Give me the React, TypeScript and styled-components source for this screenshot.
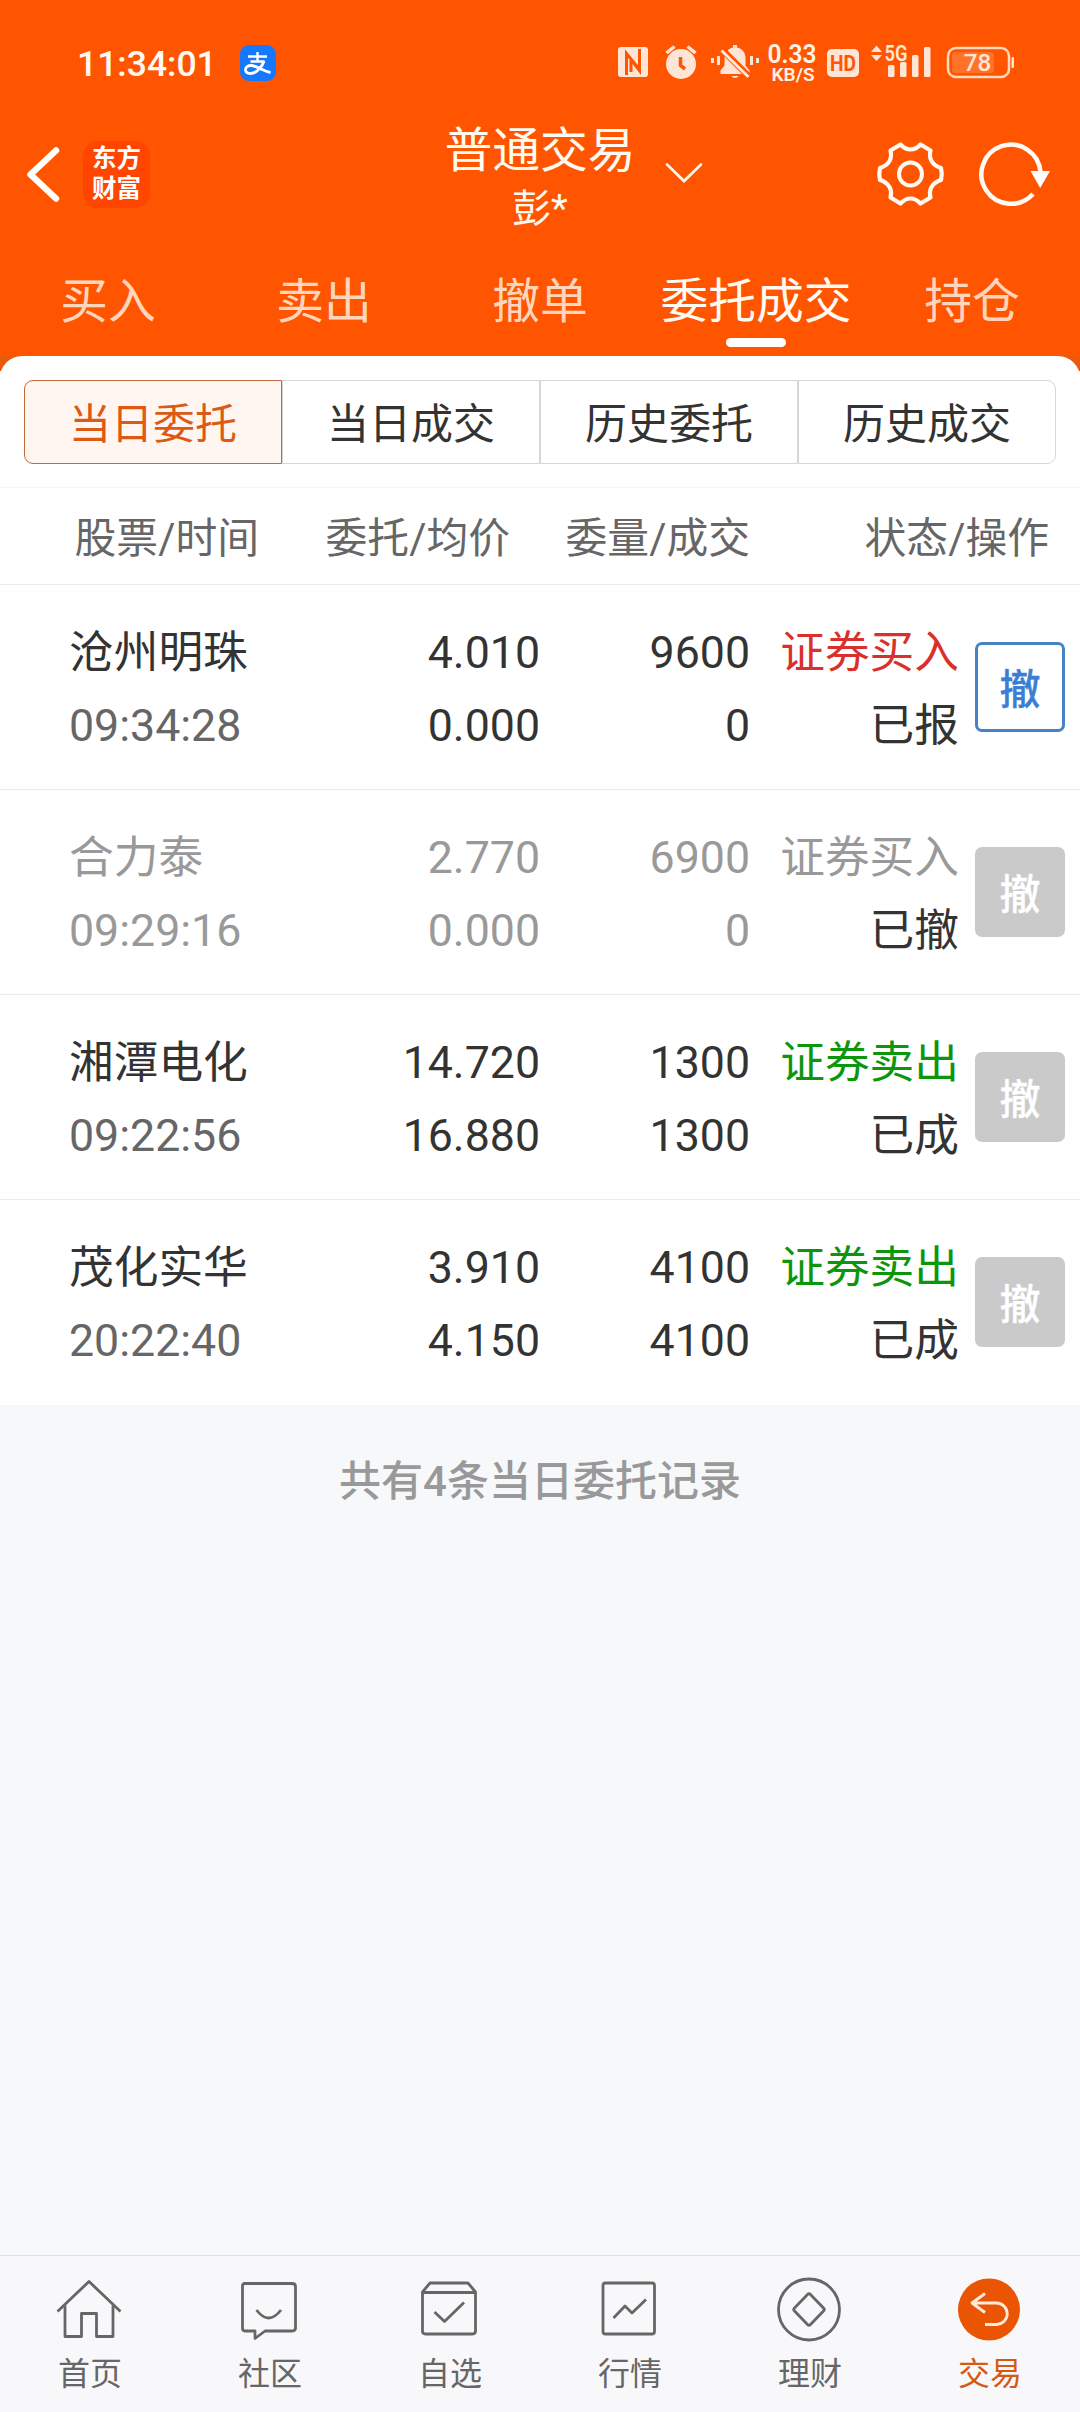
import React from 'react';
import styled, { createGlobalStyle, css } from 'styled-components';

const Global = createGlobalStyle`
  * { box-sizing: border-box; }
  body {
    margin: 0;
    background: #f7f8fa;
    font-family: Roboto, "Noto Sans CJK SC", sans-serif;
    font-weight: 400;
    -webkit-font-smoothing: antialiased;
  }
`;

const Screen = styled.div`
  width: 1080px;
  height: 2412px;
  display: flex;
  flex-direction: column;
  background: #f7f8fa;
  overflow: hidden;
`;

const Top = styled.header`
  background: #ff5500;
  height: 356px;
  flex: none;
  display: flex;
  flex-direction: column;
  color: #fffaf2;
`;

const StatusBar = styled.div`
  height: 102px;
  padding: 24px 64px 0 77px;
  display: flex;
  align-items: center;
  flex: none;
`;

const Clock = styled.span`
  font-size: 35.5px;
  font-weight: 500;
  line-height: 40px;
  width: 163px;
  padding-top: 1px;
`;

const StatusIcons = styled.div`
  margin-left: auto;
  padding-top: 4px;
  display: flex;
  svg { display: block; }
`;

const TitleBar = styled.div`
  height: 150px;
  flex: none;
  display: grid;
  grid-template-columns: 1fr 192px 1fr;
`;

const Side = styled.div<{ $end?: boolean }>`
  display: flex;
  padding-top: 39px;
  ${(p) => (p.$end ? css`justify-content: space-between; padding-right: 26px; padding-left: 28px;` : css`padding-left: 26px; gap: 22px;`)}
  svg { display: block; }
`;

const Brand = styled.div`
  width: 67px;
  height: 67px;
  border-radius: 15px;
  background: #ff4500;
  color: #fff;
  font-size: 24.5px;
  font-weight: 700;
  line-height: 30px;
  padding-top: 3px;
  text-align: center;
`;

const Titles = styled.div`
  display: flex;
  flex-direction: column;
  align-items: center;
  padding-top: 19px;
`;

const Title = styled.div`
  font-size: 47.8px;
  line-height: 60px;
  white-space: nowrap;
`;

const Subtitle = styled.div`
  font-size: 39px;
  line-height: 48px;
  margin-top: 4px;
`;

const Tabs = styled.nav`
  display: grid;
  grid-template-columns: repeat(5, 1fr);
  height: 104px;
`;

const Tab = styled.div<{ $active?: boolean }>`
  display: flex;
  flex-direction: column;
  align-items: center;
  padding-top: 20px;
  font-size: 47.8px;
  line-height: 60px;
  white-space: nowrap;
  color: ${(p) => (p.$active ? '#fffaf2' : '#ffd6bc')};
  &::after {
    content: "";
    width: 60px;
    height: 9px;
    margin-top: 6px;
    border-radius: 4.5px;
    background: ${(p) => (p.$active ? '#fff' : 'transparent')};
  }
`;

const Lip = styled.div`
  height: 15px;
  flex: none;
  overflow: hidden;
  background: #ea5a0c;
  &::before {
    content: "";
    display: block;
    height: 50px;
    border-radius: 22px;
    background: #fff;
  }
`;

const Panel = styled.main`
  background: #fff;
  flex: none;
`;

const SegmentWrap = styled.div`
  padding: 9px 24px 23px;
  border-bottom: 1px solid #f5f5f5;
`;

const Segments = styled.div`
  display: grid;
  grid-template-columns: repeat(4, 1fr);
  height: 84px;
`;

const Segment = styled.button<{ $active?: boolean }>`
  font: inherit;
  font-size: 42px;
  padding: 0 0 3px;
  background: ${(p) => (p.$active ? '#fff6f2' : '#fff')};
  color: ${(p) => (p.$active ? '#dc5a14' : '#333')};
  border: 1px solid ${(p) => (p.$active ? '#c06a3c' : '#d4d6d8')};
  &:first-child { border-radius: 9px 0 0 9px; }
  &:last-child { border-radius: 0 9px 9px 0; }
`;

const columns = css`
  display: grid;
  align-items: center;
`;

const HeadRow = styled.div`
  ${columns}
  grid-template-columns: 259px 251px 240px 1fr;
  height: 97px;
  padding: 5px 31px 0 0;
  border-bottom: 1px solid #ebebeb;
  font-size: 41.8px;
  line-height: 60px;
  color: #666;
  text-align: right;
`;

const Row = styled.div<{ $last?: boolean }>`
  ${columns}
  grid-template-columns: 260px 280px 210px 209px 1fr;
  height: 205px;
  padding: 0 15px 0 0;
  border-bottom: 1px solid ${(p) => (p.$last ? '#fff' : '#ebebeb')};
`;

const Cell = styled.div<{ $left?: boolean }>`
  display: flex;
  flex-direction: column;
  font-size: 44.7px;
  line-height: 73px;
  white-space: nowrap;
  text-align: ${(p) => (p.$left ? 'left' : 'right')};
  padding-left: ${(p) => (p.$left ? '69px' : '0')};
  padding-top: 6px;
`;

const Value = styled.span<{ $color?: string }>`
  display: block;
  height: 73px;
  color: ${(p) => p.$color || '#333'};
`;

const Cancel = styled.button<{ $enabled?: boolean }>`
  justify-self: end;
  width: 90px;
  height: 90px;
  padding: 0 0 3px;
  font: inherit;
  font-size: 41px;
  font-weight: 500;
  -webkit-text-stroke: 0.3px currentColor;
  border-radius: 7px;
  ${(p) =>
    p.$enabled
      ? css`background: #fff; color: #3b7fd4; border: 3px solid #4682c4;`
      : css`background: #cacaca; color: #fff; border: 0;`}
`;

const Summary = styled.div`
  flex: 1;
  padding-top: 47px;
  text-align: center;
  font-size: 42px;
  line-height: 60px;
  font-weight: 500;
  color: #999;
`;

const BottomNav = styled.nav`
  height: 157px;
  flex: none;
  display: grid;
  grid-template-columns: repeat(6, 1fr);
  background: #f8f8fa;
  border-top: 1px solid #dfe2e4;
`;

const NavItem = styled.div<{ $active?: boolean }>`
  display: flex;
  flex-direction: column;
  align-items: center;
  padding-top: 19px;
  font-size: 32px;
  line-height: 40px;
  color: ${(p) => (p.$active ? '#d65a14' : '#666')};
  svg { display: block; margin: 0 2px 11px 0; }
`;

const AlipayMark = () => (
  <svg width="36" height="36" viewBox="0 0 36 36">
    <rect width="36" height="36" rx="9" fill="#1677ff" />
    <g fill="none" stroke="#fff" strokeWidth="2.4">
      <path d="M8 11.500H27M17.500 7V16.500M10.500 16.500H24.500" />
      <path d="M24 16C22.500 21 17 28.500 10.500 28.500C7 28.500 5.500 26.500 5.500 24.500C5.500 22 8 20.500 11 20.500C17 20.500 22 26 30.500 27.500" strokeWidth="2.800" />
    </g>
  </svg>
);

const StatusGlyphs = () => (
  <svg width="400" height="50" viewBox="616 40 400 50" fill="#ffe5d6">
    <rect x="618" y="47" width="30" height="30" rx="3" />
    <path d="M626.500 75V53.500L639.500 69.500M639.500 49V70.500L631 59.500V72" fill="none" stroke="#ff5500" strokeWidth="3" />
    <circle cx="681" cy="64" r="15" />
    <path d="M666.500 53L674.500 46.500M695.500 53L687.500 46.500" stroke="#ffe5d6" strokeWidth="3.500" />
    <path d="M680.500 57V65.500L685 69" fill="none" stroke="#ff5500" strokeWidth="3.500" />
    <path d="M720.500 74V70.500L724.500 65.500V58C724.500 52 728.500 48.500 733 47.500V45H737V47.500C742 48.500 745.500 52.500 745.500 58V65.500L749.500 70.500V74Z" />
    <path d="M731.500 76H738.500Q737.500 78 735 78Q732.500 78 731.500 76Z" />
    <path d="M720 47.500L750 77.500" stroke="#ff5500" strokeWidth="6.500" />
    <path d="M721.500 50.500L748.500 77" stroke="#ffe5d6" strokeWidth="3" />
    <path d="M712.500 58V63M718.500 56V65M751.500 56V65M757.500 58V63" stroke="#ffe5d6" strokeWidth="3" />
    <text x="792" y="63" fontSize="25.500" fontWeight="600" textAnchor="middle" fill="#fff3e8" textLength="49" lengthAdjust="spacingAndGlyphs">0.33</text>
    <text x="793" y="80.500" fontSize="18" fontWeight="600" textAnchor="middle" fill="#fff3e8" textLength="43" lengthAdjust="spacingAndGlyphs">KB/S</text>
    <rect x="827" y="49" width="32" height="28" rx="5" />
    <text x="843" y="71" fontSize="22.500" fontWeight="700" textAnchor="middle" fill="#ff5500" textLength="26" lengthAdjust="spacingAndGlyphs">HD</text>
    <path d="M871 52L876.500 45.500L882 52ZM871 55L876.500 61L882 55Z" />
    <rect x="888" y="65" width="6.500" height="12" rx="1.500" />
    <rect x="900" y="62" width="6.500" height="15" rx="1.500" />
    <rect x="912" y="55" width="6.500" height="22" rx="1.500" />
    <rect x="924" y="47" width="6.500" height="30" rx="1.500" />
    <text x="896" y="60.500" fontSize="21.500" fontWeight="600" textAnchor="middle" textLength="23" lengthAdjust="spacingAndGlyphs">5G</text>
    <rect x="948" y="48" width="61" height="29" rx="8" fill="none" stroke="#ffd9c0" strokeWidth="2.500" />
    <rect x="952" y="52" width="42" height="21" rx="4" fill="#ff7228" />
    <rect x="1011.500" y="57" width="2.500" height="11" rx="1" />
    <text x="977.500" y="71" fontSize="24" fontWeight="500" textAnchor="middle" textLength="27.500" lengthAdjust="spacingAndGlyphs">78</text>
  </svg>
);

const BackIcon = () => (
  <svg width="35" height="67" viewBox="26 141 35 67">
    <path d="M56 150.500L30.500 174.500L56 198.500" fill="none" stroke="#fff" strokeWidth="6.500" strokeLinecap="round" strokeLinejoin="round" />
  </svg>
);

const DownIcon = () => (
  <svg width="40" height="67" viewBox="664 141 40 67">
    <path d="M667 164.500L684 181L701 164.500" fill="none" stroke="#fff6ee" strokeWidth="2.700" strokeLinecap="round" />
  </svg>
);

const RightTools = () => (
  <svg width="182" height="67" viewBox="872 141 182 67" fill="none" stroke="#fffaf4">
    <path
      strokeWidth="4.200"
      strokeLinejoin="round"
      d="M900.500 144.500Q905 149.500 910.500 149.500Q916 149.500 920.500 144.500L930.500 150.500Q929 156.500 931.500 161Q934.500 166 941 168Q942.500 174 941 180Q934.500 182 931.500 187Q929 191.500 930.500 197.500L920.500 203.500Q916 198.500 910.500 198.500Q905 198.500 900.500 203.500L890.500 197.500Q892 191.500 889.500 187Q886.500 182 880 180Q878.500 174 880 168Q886.500 166 889.500 161Q892 156.500 890.500 150.500Z"
    />
    <circle cx="910.500" cy="174" r="11.500" strokeWidth="4" />
    <path d="M1040.500 172A29.600 29.600 0 1 0 1033 194" strokeWidth="4.500" />
    <path d="M1030.500 171H1050L1040.200 188Z" fill="#fff" stroke="none" />
  </svg>
);

const icons: Record<string, React.ReactNode> = {
  首页: (
    <>
      <path d="M2.500 36.500L34 6.500L65.500 36.500" />
      <path d="M10 30.500V61.500H26.500V38.500H41.500V61.500H58V30.500" />
    </>
  ),
  社区: (
    <>
      <path d="M9 8.500H57Q60.500 8.500 60.500 11.500V53Q60.500 56 57 56H30L20 63.500V56H10Q7.500 56 7.500 53V11Q7.500 8.500 10 8.500Z" />
      <path d="M21.500 35Q33.500 51 46 35" />
    </>
  ),
  自选: (
    <>
      <path d="M7.500 17L15 8H53L60.500 17V56Q60.500 59 57.500 59H10.500Q7.500 59 7.500 56Z" />
      <path d="M8 17.500H60M19.500 37L29.500 46.500L49 27.500" />
    </>
  ),
  行情: (
    <>
      <rect x="8" y="8" width="51.500" height="51" rx="2.500" />
      <path d="M18.500 43L30 31L37 38L51 24.500" />
    </>
  ),
  理财: (
    <>
      <circle cx="34" cy="34.500" r="30.500" />
      <path d="M32.500 19.500Q34 18 35.500 19.500L48.500 33Q50 34.500 48.500 36L35.500 49.500Q34 51 32.500 49.500L19.500 36Q18 34.500 19.500 33Z" />
    </>
  ),
  交易: (
    <>
      <circle cx="34" cy="34.500" r="31" fill="#ea5504" stroke="none" />
      <path d="M30 18.500L17 28L30 37.500M17 28H41.500A10.700 10.700 0 0 1 41.500 49.500H30" stroke="#ffeadb" />
    </>
  ),
};

const orders = [
  { name: '沧州明珠', time: '09:34:28', price: ['4.010', '0.000'], qty: ['9600', '0'], side: '证券买入', state: '已报', color: '#d9302c', enabled: true },
  { name: '合力泰', time: '09:29:16', price: ['2.770', '0.000'], qty: ['6900', '0'], side: '证券买入', state: '已撤', color: '#999', muted: true },
  { name: '湘潭电化', time: '09:22:56', price: ['14.720', '16.880'], qty: ['1300', '1300'], side: '证券卖出', state: '已成', color: '#0c960c' },
  { name: '茂化实华', time: '20:22:40', price: ['3.910', '4.150'], qty: ['4100', '4100'], side: '证券卖出', state: '已成', color: '#0c960c' },
];

export default function App() {
  return (
    <Screen>
      <Global />
      <Top>
        <StatusBar>
          <Clock>11:34:01</Clock>
          <AlipayMark />
          <StatusIcons><StatusGlyphs /></StatusIcons>
        </StatusBar>
        <TitleBar>
          <Side>
            <BackIcon />
            <Brand>东方<br />财富</Brand>
          </Side>
          <Titles>
            <Title>普通交易</Title>
            <Subtitle>彭*</Subtitle>
          </Titles>
          <Side $end>
            <DownIcon />
            <RightTools />
          </Side>
        </TitleBar>
        <Tabs>
          {['买入', '卖出', '撤单', '委托成交', '持仓'].map((t) => (
            <Tab key={t} $active={t === '委托成交'}>{t}</Tab>
          ))}
        </Tabs>
      </Top>
      <Lip />
      <Panel>
        <SegmentWrap>
          <Segments>
            {['当日委托', '当日成交', '历史委托', '历史成交'].map((t, i) => (
              <Segment key={t} $active={i === 0}>{t}</Segment>
            ))}
          </Segments>
        </SegmentWrap>
        <HeadRow>
          <span>股票/时间</span>
          <span>委托/均价</span>
          <span>委量/成交</span>
          <span>状态/操作</span>
        </HeadRow>
        {orders.map((o, i) => {
          const main = o.muted ? '#999' : '#333';
          return (
            <Row key={o.name} $last={i === orders.length - 1}>
              <Cell $left>
                <Value $color={main}>{o.name}</Value>
                <Value $color={o.muted ? '#999' : '#666'}>{o.time}</Value>
              </Cell>
              <Cell>
                {o.price.map((v, k) => <Value key={k} $color={main}>{v}</Value>)}
              </Cell>
              <Cell>
                {o.qty.map((v, k) => <Value key={k} $color={main}>{v}</Value>)}
              </Cell>
              <Cell>
                <Value $color={o.color}>{o.side}</Value>
                <Value>{o.state}</Value>
              </Cell>
              <Cancel $enabled={o.enabled}>撤</Cancel>
            </Row>
          );
        })}
      </Panel>
      <Summary>共有4条当日委托记录</Summary>
      <BottomNav>
        {Object.keys(icons).map((k) => (
          <NavItem key={k} $active={k === '交易'}>
            <svg width="68" height="68" viewBox="0 0 68 68" fill="none" stroke="#666" strokeWidth="2.800" strokeLinejoin="round">
              {icons[k]}
            </svg>
            {k}
          </NavItem>
        ))}
      </BottomNav>
    </Screen>
  );
}
